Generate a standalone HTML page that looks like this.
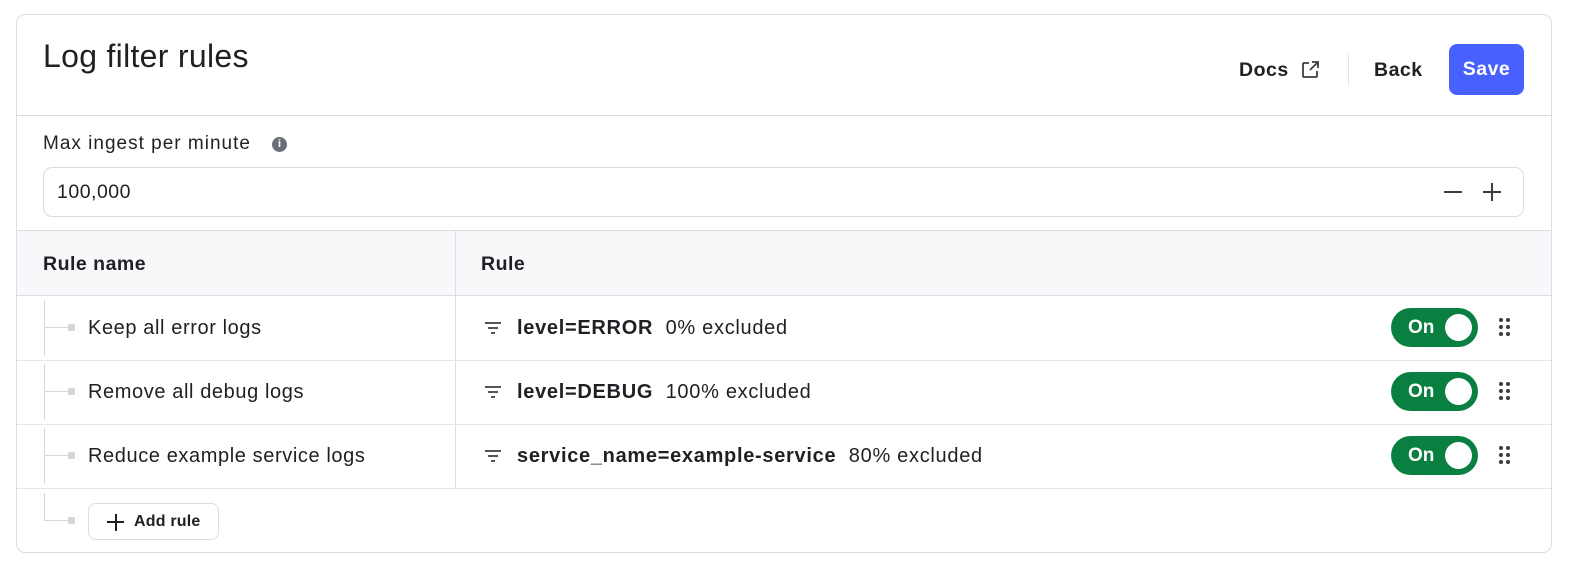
<!DOCTYPE html>
<html><head><meta charset="utf-8"><style>
*{box-sizing:border-box;margin:0;padding:0}
body{width:1570px;height:570px;background:#fff;font-family:"Liberation Sans",sans-serif;color:#1f2024;position:relative;overflow:hidden;letter-spacing:0.5px}
.card{position:absolute;left:16px;top:14px;width:1536px;height:539px;border:1px solid #dcdde2;border-radius:9px;overflow:hidden}
.abs{position:absolute}
h1{position:absolute;left:26px;top:23px;font-size:32px;font-weight:400;letter-spacing:0.3px}
.hb{position:absolute;left:0;right:0;top:100px;border-top:1px solid #dcdde2}
.btn{position:absolute;font-size:19.5px;font-weight:700}
.save{left:1432px;top:29px;width:75px;height:51px;background:#4760ff;color:#fff;border-radius:8px;text-align:center;line-height:51px}
.lbl{left:26px;top:118px;font-size:19px;letter-spacing:1px}
.inp{left:26px;top:152px;width:1481px;height:50px;border:1px solid #dcdde2;border-radius:9px;font-size:19.5px;padding:13px 13px}
.th{left:0;right:0;top:215px;height:66px;background:#f7f8fa;border-top:1px solid #dcdde2;border-bottom:1px solid #dcdde2}
.vd{left:438px;top:215px;width:1px;height:259px;background:#dcdde2}
.row{left:0;right:0;height:65px;border-bottom:1px solid #e6e7ea}
.name{position:absolute;left:71px;font-size:20px;top:21px;letter-spacing:0.6px}
.rule{position:absolute;left:500px;font-size:20px;top:21px;letter-spacing:0.7px}
.tog{position:absolute;left:1374px;top:12px;width:87px;height:39px;border-radius:20px;background:#0a7f42;color:#fff;font-weight:700;font-size:19px;line-height:39px;padding-left:17px;letter-spacing:0}
.tog:after{content:"";position:absolute;right:6px;top:6px;width:27px;height:27px;border-radius:50%;background:#fff}
.vl{position:absolute;left:27px;top:4px;width:1px;height:56px;background:#d6d7dc}
.hl{position:absolute;left:27px;top:31px;width:24px;height:1px;background:#d6d7dc}
.sq{position:absolute;left:51px;top:28px;width:7px;height:7px;background:#d6d7dc;border-radius:1px}
</style></head><body>
<div class="card">
<h1>Log filter rules</h1>
<div class="btn abs" style="left:1222px;top:44px">Docs</div>
<svg class="abs" style="left:1283px;top:45px" width="20" height="20" viewBox="0 0 20 20" fill="none" stroke="#3b3d44" stroke-width="1.8"><path d="M9 3H4a1 1 0 0 0-1 1v12a1 1 0 0 0 1 1h12a1 1 0 0 0 1-1v-5"/><path d="M12 2h6v6M18 2l-8 8"/></svg>
<div class="abs" style="left:1331px;top:39px;width:1px;height:32px;background:#e3e4e8"></div>
<div class="btn abs" style="left:1357px;top:44px">Back</div>
<div class="btn save">Save</div>
<div class="hb"></div>
<div class="abs lbl">Max ingest per minute</div>
<div class="abs" style="left:255px;top:122px;width:15px;height:15px;border-radius:50%;background:#6b6e77;color:#fff;font-size:11px;font-weight:700;text-align:center;line-height:15px;letter-spacing:0">i</div>
<div class="abs inp">100,000</div>
<div class="abs" style="left:1427px;top:176px;width:18px;height:2px;background:#3b3d44"></div>
<div class="abs" style="left:1466px;top:176px;width:18px;height:2px;background:#3b3d44"></div>
<div class="abs" style="left:1474px;top:168px;width:2px;height:18px;background:#3b3d44"></div>
<div class="abs th"><div class="abs" style="left:26px;top:22px;font-size:19.5px;font-weight:700">Rule name</div><div class="abs" style="left:464px;top:22px;font-size:19.5px;font-weight:700">Rule</div></div>
<div class="abs vd"></div>

<div class="abs row" style="top:281px"><div class="vl"></div><div class="hl"></div><div class="sq"></div><div class="name">Keep all error logs</div>
<svg class="abs" style="left:466px;top:23px" width="20" height="18"><path d="M2 4h16M5 9h10M8 14h4" stroke="#3b3d44" stroke-width="1.8"/></svg>
<div class="rule"><b>level=ERROR</b>&nbsp; 0% excluded</div><div class="tog">On</div>
<svg class="abs" style="left:1480px;top:21px" width="16" height="22" fill="#3b3d44"><circle cx="4" cy="3" r="2"/><circle cx="11" cy="3" r="2"/><circle cx="4" cy="10" r="2"/><circle cx="11" cy="10" r="2"/><circle cx="4" cy="17" r="2"/><circle cx="11" cy="17" r="2"/></svg></div>

<div class="abs row" style="top:345px"><div class="vl"></div><div class="hl"></div><div class="sq"></div><div class="name">Remove all debug logs</div>
<svg class="abs" style="left:466px;top:23px" width="20" height="18"><path d="M2 4h16M5 9h10M8 14h4" stroke="#3b3d44" stroke-width="1.8"/></svg>
<div class="rule"><b>level=DEBUG</b>&nbsp; 100% excluded</div><div class="tog">On</div>
<svg class="abs" style="left:1480px;top:21px" width="16" height="22" fill="#3b3d44"><circle cx="4" cy="3" r="2"/><circle cx="11" cy="3" r="2"/><circle cx="4" cy="10" r="2"/><circle cx="11" cy="10" r="2"/><circle cx="4" cy="17" r="2"/><circle cx="11" cy="17" r="2"/></svg></div>

<div class="abs row" style="top:409px"><div class="vl"></div><div class="hl"></div><div class="sq"></div><div class="name">Reduce example service logs</div>
<svg class="abs" style="left:466px;top:23px" width="20" height="18"><path d="M2 4h16M5 9h10M8 14h4" stroke="#3b3d44" stroke-width="1.8"/></svg>
<div class="rule"><b>service_name=example-service</b>&nbsp; 80% excluded</div><div class="tog">On</div>
<svg class="abs" style="left:1480px;top:21px" width="16" height="22" fill="#3b3d44"><circle cx="4" cy="3" r="2"/><circle cx="11" cy="3" r="2"/><circle cx="4" cy="10" r="2"/><circle cx="11" cy="10" r="2"/><circle cx="4" cy="17" r="2"/><circle cx="11" cy="17" r="2"/></svg></div>

<div class="abs" style="left:0;top:474px;width:100%;height:64px">
<div class="vl" style="top:4px;height:28px"></div><div class="hl"></div><div class="sq"></div>
<div class="abs" style="left:71px;top:14px;width:131px;height:37px;border:1px solid #dcdde2;border-radius:8px;font-size:16px;font-weight:700;padding:9px 0 0 45px;letter-spacing:0.2px">Add rule</div>
<div class="abs" style="left:90px;top:32px;width:17px;height:2px;background:#1f2024"></div>
<div class="abs" style="left:97.5px;top:24.5px;width:2px;height:17px;background:#1f2024"></div>
</div>
</div>
</body></html>
